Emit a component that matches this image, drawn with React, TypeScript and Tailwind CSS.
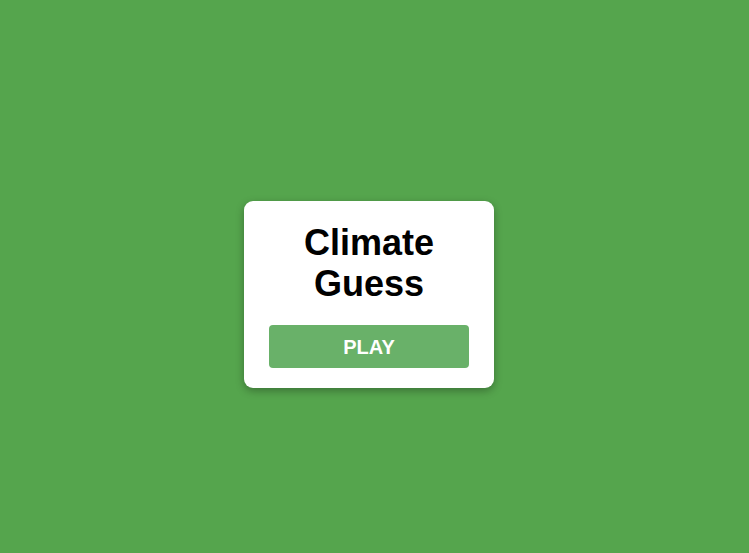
export default function App() {
  return (
    <div
      className="min-h-screen bg-[#55a54d] flex items-center justify-center pt-[36px] pr-[11px]"
      style={{ fontFamily: '"Liberation Sans", Arial, sans-serif' }}
    >
      <div className="w-[250px] bg-white rounded-[9px] px-[25px] pt-[21px] pb-[20px] shadow-[0_3px_8px_rgba(0,0,0,0.3)] flex flex-col items-center">
        <h1 className="text-[36px] font-bold text-black text-center leading-[41px]">
          Climate
          <br />
          Guess
        </h1>
        <button className="mt-[21px] w-[200px] h-[43px] rounded-[4px] bg-[#69b169] text-white text-[20px] font-bold">
          PLAY
        </button>
      </div>
    </div>
  )
}
